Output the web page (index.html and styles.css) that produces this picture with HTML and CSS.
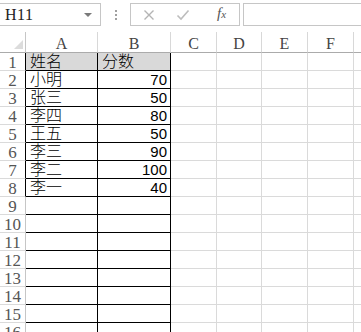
FILE: index.html
```
<!DOCTYPE html>
<html lang="zh">
<head>
<meta charset="utf-8">
<link rel="stylesheet" href="styles.css">
</head>
<body>
<div class="app">
  <div class="toolbar">
    <div class="namebox"><span class="ref">H11</span><span class="caret"></span></div>
    <div class="dots"><i></i><i></i><i></i></div>
    <div class="fxbox">
      <svg class="ico x" width="12" height="12" viewBox="0 0 12 12"><path d="M1.5 1.5L10.5 10.5M10.5 1.5L1.5 10.5" stroke="#b4b4b4" stroke-width="1.4" fill="none"/></svg>
      <svg class="ico v" width="14" height="12" viewBox="0 0 14 12"><path d="M1.5 6.5L5 10L12.5 1.5" stroke="#bdbdbd" stroke-width="1.6" fill="none"/></svg>
      <span class="fx">f<span class="sub">x</span></span>
    </div>
    <div class="formula"></div>
  </div>
  <div class="sheet">
    <div class="corner"><span class="tri"></span></div>
    <div class="ch">A</div><div class="ch">B</div><div class="ch">C</div><div class="ch">D</div><div class="ch">E</div><div class="ch">F</div><div class="ch last"></div>

    <div class="rh edge">1</div><div class="d hd">姓名</div><div class="d hd">分数</div><div class="c"></div><div class="c"></div><div class="c"></div><div class="c"></div><div class="c"></div>
    <div class="rh edge">2</div><div class="d">小明</div><div class="d n">70</div><div class="c"></div><div class="c"></div><div class="c"></div><div class="c"></div><div class="c"></div>
    <div class="rh edge">3</div><div class="d">张三</div><div class="d n">50</div><div class="c"></div><div class="c"></div><div class="c"></div><div class="c"></div><div class="c"></div>
    <div class="rh edge">4</div><div class="d">李四</div><div class="d n">80</div><div class="c"></div><div class="c"></div><div class="c"></div><div class="c"></div><div class="c"></div>
    <div class="rh edge">5</div><div class="d">王五</div><div class="d n">50</div><div class="c"></div><div class="c"></div><div class="c"></div><div class="c"></div><div class="c"></div>
    <div class="rh edge">6</div><div class="d">李三</div><div class="d n">90</div><div class="c"></div><div class="c"></div><div class="c"></div><div class="c"></div><div class="c"></div>
    <div class="rh edge">7</div><div class="d">李二</div><div class="d n">100</div><div class="c"></div><div class="c"></div><div class="c"></div><div class="c"></div><div class="c"></div>
    <div class="rh edge">8</div><div class="d">李一</div><div class="d n">40</div><div class="c"></div><div class="c"></div><div class="c"></div><div class="c"></div><div class="c"></div>
    <div class="rh">9</div><div class="d"></div><div class="d"></div><div class="c"></div><div class="c"></div><div class="c"></div><div class="c"></div><div class="c"></div>
    <div class="rh">10</div><div class="d"></div><div class="d"></div><div class="c"></div><div class="c"></div><div class="c"></div><div class="c"></div><div class="c"></div>
    <div class="rh">11</div><div class="d"></div><div class="d"></div><div class="c"></div><div class="c"></div><div class="c"></div><div class="c"></div><div class="c"></div>
    <div class="rh">12</div><div class="d"></div><div class="d"></div><div class="c"></div><div class="c"></div><div class="c"></div><div class="c"></div><div class="c"></div>
    <div class="rh">13</div><div class="d"></div><div class="d"></div><div class="c"></div><div class="c"></div><div class="c"></div><div class="c"></div><div class="c"></div>
    <div class="rh">14</div><div class="d"></div><div class="d"></div><div class="c"></div><div class="c"></div><div class="c"></div><div class="c"></div><div class="c"></div>
    <div class="rh">15</div><div class="d"></div><div class="d"></div><div class="c"></div><div class="c"></div><div class="c"></div><div class="c"></div><div class="c"></div>
    <div class="rh">16</div><div class="d"></div><div class="d"></div><div class="c"></div><div class="c"></div><div class="c"></div><div class="c"></div><div class="c"></div>
  </div>
</div>
</body>
</html>
```
FILE: styles.css
```
* { box-sizing: border-box; }
html, body { margin: 0; padding: 0; background: #fff; }
.app { width: 361px; height: 332px; overflow: hidden; font-family: "Liberation Sans", "Noto Sans CJK SC", sans-serif; }

.toolbar { display: flex; height: 32px; padding-top: 3px; align-items: flex-start; }
.namebox {
  width: 102px; height: 23px; margin-left: -1px;
  border: 1px solid #c6c6c6; display: flex; align-items: center; justify-content: space-between;
  padding: 0 8px 0 5px;
}
.ref { font-family: "Liberation Serif", serif; font-size: 16px; color: #222; letter-spacing: 0.5px; }
.caret { width: 0; height: 0; border-left: 4px solid transparent; border-right: 4px solid transparent; border-top: 4px solid #7a7a7a; }
.dots { width: 29px; height: 23px; display: flex; flex-direction: column; align-items: center; justify-content: center; gap: 2px; }
.dots i { display: block; width: 2px; height: 2px; background: #a0a0a0; }
.fxbox {
  width: 110px; height: 23px; border: 1px solid #c6c6c6; display: flex; align-items: center; position: relative;
}
.ico { position: absolute; }
.ico.x { left: 12px; top: 5px; }
.ico.v { left: 45px; top: 5px; }
.fx { position: absolute; left: 86px; top: 1px; font-family: "Liberation Serif", serif; font-style: italic; font-size: 15px; color: #555; }
.fx .sub { font-size: 11px; }
.formula { flex: 1; height: 23px; margin-left: 3px; border: 1px solid #c6c6c6; border-right: none; }

.sheet {
  display: grid;
  grid-template-columns: 26px 72px 73px 46px 45px 46px 46px 7px;
  grid-template-rows: 21px repeat(16, 18px);
}
.corner { border-right: 1px solid #c6c6c6; border-bottom: 1px solid #ababab; position: relative; }
.tri { position: absolute; right: 2px; bottom: 3px; width: 0; height: 0; border-left: 9px solid transparent; border-bottom: 9px solid #dcdcdc; }
.ch {
  border-right: 1px solid #d8d8d8; border-bottom: 1px solid #ababab;
  display: flex; align-items: center; justify-content: center;
  font-family: "Liberation Serif", serif; font-size: 16px; color: #444; padding-top: 4px;
}
.ch.last { border-right: none; }
.rh {
  border-right: 1px solid #c6c6c6; border-bottom: 1px solid #dadada;
  display: flex; align-items: center; justify-content: center;
  font-family: "Liberation Serif", serif; font-size: 17px; color: #555; padding-top: 2px;
}
.rh.edge { border-right-color: #000; }
.c { border-right: 1px solid #dadada; border-bottom: 1px solid #dadada; }
.sheet > .c:nth-child(8n+8) { border-right: none; }
.d {
  border-right: 1px solid #000; border-bottom: 1px solid #000;
  font-size: 16px; line-height: 17px; color: #000; padding: 0 3px 0 4px;
  display: flex; align-items: flex-end; white-space: nowrap; font-weight: 300;
}
.d.hd { background: #d9d9d9; }
.d.n { justify-content: flex-end; font-size: 15px; font-weight: 400; }
```
